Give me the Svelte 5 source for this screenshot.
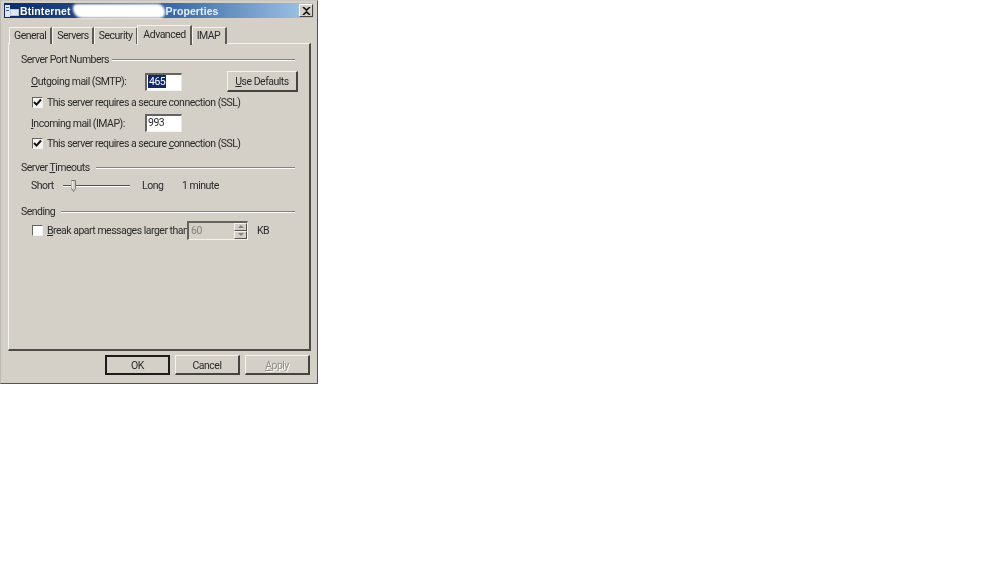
<script>
  const tabs = ['General', 'Servers', 'Security', 'Advanced', 'IMAP'];
  const active = 'Advanced';
</script>

<div class="window">
  <div class="titlebar">
    <svg class="app-icon" width="16" height="14" viewBox="0 0 16 14">
      <rect x="1" y="1" width="5" height="12" fill="#dfe6ee" />
      <rect x="2" y="3" width="3" height="1" fill="#44587c" />
      <rect x="2" y="6" width="3" height="1" fill="#44587c" />
      <rect x="6" y="5" width="9" height="7" fill="#b9c6d6" />
      <rect x="7" y="6" width="7" height="5" fill="#dfe6ee" />
    </svg>
    <span class="title-name">Btinternet</span>
    <span class="redacted"></span>
    <span class="title-props">Properties</span>
    <button class="close" aria-label="Close">
      <svg width="9" height="8" viewBox="0 0 9 8">
        <path d="M1 0l3.5 3.2L8 0M1 8l3.5-3.2L8 8" fill="none" stroke="#111" stroke-width="1.6" />
      </svg>
    </button>
  </div>

  <div class="tabs">
    {#each tabs as tab}
      <div class="tab" class:active={tab === active}>{tab}</div>
    {/each}
  </div>

  <div class="pane">
    <div class="group-head"><span>Server Port Numbers</span><i></i></div>

    <div class="row port-row first">
      <span class="port-label"><u>O</u>utgoing mail (SMTP):</span>
      <span class="input selected"><b>465</b></span>
      <button class="btn defaults"><u>U</u>se Defaults</button>
    </div>
    <div class="row check-row">
      <span class="check on">
        <svg width="9" height="9" viewBox="0 0 9 9"><path d="M1 4l2.5 2.6L8 1.5" fill="none" stroke="#111" stroke-width="2" /></svg>
      </span>
      <span>This server requires a secure connection (SSL)</span>
    </div>
    <div class="row port-row second">
      <span class="port-label"><u>I</u>ncoming mail (IMAP):</span>
      <span class="input">993</span>
    </div>
    <div class="row check-row">
      <span class="check on">
        <svg width="9" height="9" viewBox="0 0 9 9"><path d="M1 4l2.5 2.6L8 1.5" fill="none" stroke="#111" stroke-width="2" /></svg>
      </span>
      <span>This server requires a secure <u>c</u>onnection (SSL)</span>
    </div>

    <div class="group-head timeouts"><span>Server <u>T</u>imeouts</span><i></i></div>
    <div class="row slider-row">
      <span class="short">Short</span>
      <span class="slider">
        <span class="track"></span>
        <svg class="thumb" width="6" height="12" viewBox="0 0 6 12">
          <path d="M0.5 0.5h4v8l-2 3-2-3z" fill="#d4d0c8" stroke="#777" />
          <path d="M1 1v7" stroke="#fff" />
        </svg>
      </span>
      <span class="long">Long</span>
      <span>1 minute</span>
    </div>

    <div class="group-head sending"><span>Sending</span><i></i></div>
    <div class="row break-row">
      <span class="check"></span>
      <span class="break-label"><u>B</u>reak apart messages larger than</span>
      <span class="spin">
        <span class="spin-value">60</span>
        <span class="spin-btns">
          <span class="up"></span>
          <span class="down"></span>
        </span>
      </span>
      <span class="kb">KB</span>
    </div>
  </div>

  <div class="footer">
    <button class="btn default">OK</button>
    <button class="btn">Cancel</button>
    <button class="btn disabled"><u>A</u>pply</button>
  </div>
</div>

<style>
  :global(body) {
    margin: 0;
    background: #fff;
  }

  .window {
    box-sizing: border-box;
    width: 318px;
    height: 384px;
    padding: 2px 7px 8px 3px;
    background: #d4d0c8;
    border: 1px solid #55534e;
    border-top-color: #c9c6bf;
    border-left-color: #bdbab3;
    font-family: Roboto, "Liberation Sans", Arial, sans-serif;
    font-size: 10.5px;
    letter-spacing: -0.5px;
    color: #2a2a2a;
    filter: blur(0.4px);
  }

  .titlebar {
    display: flex;
    align-items: center;
    height: 15px;
    margin-bottom: 1px;
    margin-right: -4px;
    background: linear-gradient(90deg, #0b2a6b 0%, #3d6ba6 55%, #a5c8ea 100%);
    font-family: "Liberation Sans", Arial, sans-serif;
    font-weight: 700;
    font-size: 10.5px;
    letter-spacing: 0.1px;
  }

  .app-icon {
    flex: none;
  }

  .title-name {
    color: #fff;
  }

  .redacted {
    width: 92px;
    height: 14px;
    margin-left: 2px;
    background: #fff;
    border-radius: 4px 8px 5px 9px;
    filter: blur(1px);
  }

  .title-props {
    margin-left: 1px;
    color: #e6f0fa;
  }

  .close {
    display: flex;
    align-items: center;
    justify-content: center;
    box-sizing: border-box;
    width: 14px;
    height: 13px;
    margin-left: auto;
    margin-right: 1px;
    padding: 0;
    background: #d4d0c8;
    border: 1px solid;
    border-color: #fff #444 #444 #fff;
  }

  .tabs {
    display: flex;
    align-items: flex-end;
    height: 24px;
    padding-left: 5px;
    position: relative;
    z-index: 1;
  }

  .tab {
    box-sizing: border-box;
    height: 17px;
    margin-bottom: -1px;
    padding: 1px 3px 0 4px;
    background: #d4d0c8;
    border-top: 1px solid #f4f3ef;
    border-left: 1px solid #f4f3ef;
    border-right: 2px solid #5e5c57;
    white-space: nowrap;
  }

  .tab:nth-child(1),
  .tab:nth-child(3) {
    padding-right: 4px;
  }

  .tab:nth-child(5) {
    padding-right: 5px;
  }

  .tab.active {
    height: 20px;
    padding: 2px 4px 0 5px;
    margin-bottom: -2px;
    margin-left: -1px;
  }

  .pane {
    box-sizing: border-box;
    width: 303px;
    height: 308px;
    margin-left: 4px;
    padding: 9px 14px 0 12px;
    background: #d4d0c8;
    border: 1px solid;
    border-color: #f4f3ef #4d4b47 #4d4b47 #f4f3ef;
    border-right-width: 2px;
    border-bottom-width: 2px;
  }

  .group-head {
    display: flex;
    align-items: center;
    gap: 3px;
    height: 13px;
  }

  .group-head i {
    flex: 1;
    height: 0;
    border-top: 1px solid #85827b;
    border-bottom: 1px solid #fff;
  }

  .group-head.timeouts {
    margin-top: 9px;
  }

  .group-head.timeouts i {
    margin-left: 3px;
  }

  .group-head.sending {
    margin-top: 12px;
  }

  .group-head.sending i {
    margin-left: 3px;
  }

  .row {
    display: flex;
    align-items: center;
  }

  .port-row {
    padding-left: 10px;
  }

  .port-row.first {
    height: 21px;
    margin-top: 5px;
  }

  .port-row.second {
    height: 18px;
    margin-top: 3px;
  }

  .port-label {
    width: 114px;
    flex: none;
  }

  .input {
    box-sizing: border-box;
    width: 37px;
    height: 18px;
    padding: 0 1px;
    background: #fff;
    border: 1px solid;
    border-color: #66645f #e8e6e1 #f4f3ef #66645f;
    border-width: 2px 1px 1px 2px;
    flex: none;
  }

  .input b {
    font-weight: 400;
    background: #0e2a68;
    color: #fff;
    padding: 0 1px;
  }

  .btn {
    box-sizing: border-box;
    width: 65px;
    height: 21px;
    padding: 0;
    background: #d4d0c8;
    border: 1px solid;
    border-color: #f4f3ef #45433f #45433f #f4f3ef;
    border-width: 1px 2px 2px 1px;
    font: inherit;
    letter-spacing: inherit;
    color: inherit;
  }

  .defaults {
    width: 71px;
    margin-left: 45px;
    flex: none;
  }

  .check-row {
    height: 17px;
    margin-top: 2px;
    padding-left: 11px;
    gap: 4px;
  }

  .second + .check-row {
    margin-top: 3px;
  }

  .check {
    display: flex;
    align-items: center;
    justify-content: center;
    box-sizing: border-box;
    width: 11px;
    height: 11px;
    flex: none;
    background: #fff;
    border: 1px solid;
    border-color: #66645f #f2f1ed #f2f1ed #66645f;
  }

  .check.on {
    background: #f4f3ef;
  }

  .slider-row {
    height: 15px;
    margin-top: 4px;
    padding-left: 10px;
  }

  .short {
    width: 32px;
    flex: none;
  }

  .slider {
    position: relative;
    display: flex;
    align-items: center;
    width: 67px;
    height: 14px;
    flex: none;
  }

  .track {
    flex: 1;
    height: 1px;
    background: #55534e;
    border-bottom: 1px solid #fff;
  }

  .thumb {
    position: absolute;
    left: 8px;
    top: 1px;
  }

  .long {
    width: 40px;
    margin-left: 12px;
    flex: none;
  }

  .break-row {
    height: 20px;
    margin-top: 2px;
    padding-left: 11px;
  }

  .break-label {
    margin-left: 4px;
    width: 140px;
    flex: none;
    white-space: nowrap;
  }

  .spin {
    display: flex;
    align-items: center;
    box-sizing: border-box;
    width: 61px;
    height: 19px;
    flex: none;
    background: #d4d0c8;
    border: 1px solid;
    border-color: #66645f #f4f3ef #f4f3ef #66645f;
    border-width: 2px 1px 1px 2px;
  }

  .spin-value {
    flex: 1;
    padding-left: 2px;
    color: #85827b;
  }

  .spin-btns {
    display: flex;
    flex-direction: column;
    width: 13px;
    height: 100%;
  }

  .up,
  .down {
    position: relative;
    flex: 1;
    border: 1px solid;
    border-color: #f4f3ef #55534e #55534e #f4f3ef;
  }

  .up::after,
  .down::after {
    content: '';
    position: absolute;
    left: 3px;
    top: 1px;
    border-left: 3px solid transparent;
    border-right: 3px solid transparent;
  }

  .up::after {
    border-bottom: 3px solid #85827b;
  }

  .down::after {
    border-top: 3px solid #85827b;
  }

  .kb {
    margin-left: 9px;
  }

  .footer {
    display: flex;
    justify-content: flex-end;
    gap: 5px;
    margin-top: 4px;
  }

  .footer .btn {
    width: 65px;
    height: 20px;
    padding-top: 1px;
  }

  .footer .default {
    border: 2px solid #1c1c1a;
    padding-top: 0;
  }

  .footer .disabled {
    color: #8e8c86;
    text-shadow: 1px 1px 0 #fff;
  }
</style>
